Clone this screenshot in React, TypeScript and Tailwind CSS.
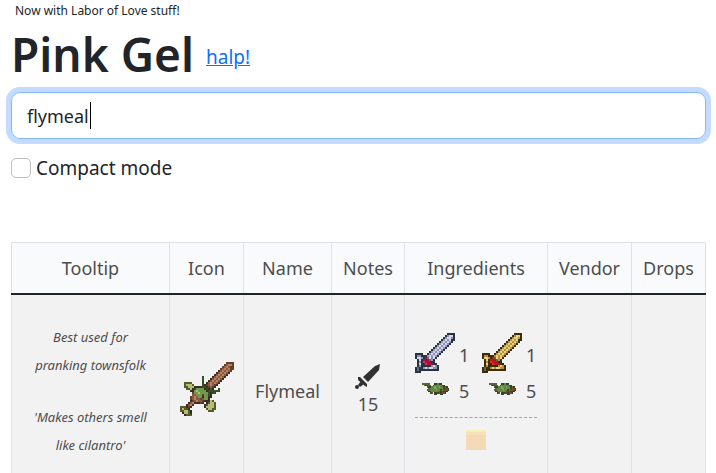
import { useState } from "react";

type Palette = Record<string, string>;

const FLYMEAL = [
  ".......................dddd",
  "......................dblld",
  ".....................dblbdd",
  "....................dblbldd",
  "...................kblblbd",
  "..................kblblbk",
  ".................kblblbk",
  "...........h....kblblbk",
  "...........h...kblblbk",
  "...........h..kblblbk",
  "..oooo.....h.kblblbk",
  "..oyyyo....hkdblbdk",
  "..ooyyykkkkhhkdbdk",
  "...ooykhggggkhkdk..h",
  ".....kkgyggggkhhhhhh",
  "......dggygggghkhh",
  "......bbgggdgghk",
  ".....dblbggkggkk",
  ".....dblbbdbggk",
  ".....kdblbbdkkkyo",
  "....kblkkkdk.koyyo",
  "...kblk.....koyyyo",
  "oookdk......kyyyyo",
  "oyook........oyyoo",
  "ooyyok........ooo",
  ".kyyok",
  "..kooo",
];
const FLYMEAL_COLORS: Palette = {
  k: "#3a2c22", d: "#63402c", b: "#8a5a3e", l: "#b58263",
  g: "#6f9a4c", h: "#33502b", y: "#b6bd76", o: "#565c2e",
};

const SWORD = [
  "................kkkk",
  "...............kswwk",
  "..............kswwsk",
  ".............kswswkk",
  "............kswswsk",
  "...........kswswsk",
  "..........kswswsk",
  ".........kswswsk",
  "........kswswsk",
  ".......kswswsk",
  "kkkk..kswswsk",
  "ksskkkswswsk",
  "kwwskrmwswk",
  ".kwkrrrmsk",
  ".kskprrrkk",
  ".kwkkprrrkk",
  ".kskkkkkswsk",
  "kmkkswswwssk",
  "kmkkkkkkkkkk",
  "kkk",
];
const SILVER: Palette = { k: "#27333f", s: "#8b92b4", w: "#d9d3ea", m: "#626a84", r: "#a80f38", p: "#e03058" };
const GOLD: Palette = { k: "#3b2a0c", s: "#b1913c", w: "#e8d27a", m: "#6c6250", r: "#b51a18", p: "#e83028" };

const BEETLE = [
  "ooooo...kkgkk.....",
  ".okkoo.kgggggkk...",
  "...okkggyggyggkok.",
  "....ogggyyggggkbbk",
  "...ooggggyggdgbbbk",
  "....kkgggggbdbdkk.",
  ".....kb.kkdbkbbk..",
  "........kk..kk....",
];
const BEETLE_COLORS: Palette = { k: "#36422c", g: "#5f8842", y: "#86a75a", o: "#59653a", b: "#704c2e", d: "#4a4429" };

function Sprite({ rows, colors, label, className }: { rows: string[]; colors: Palette; label: string; className: string }) {
  const width = Math.max(...rows.map((row) => row.length));
  return (
    <svg role="img" aria-label={label} viewBox={`0 0 ${width} ${rows.length}`} shapeRendering="crispEdges" className={className}>
      {rows.flatMap((row, y) =>
        [...row].map((cell, x) => (cell === "." ? null : <rect key={`${x}-${y}`} x={x} y={y} width="1" height="1" fill={colors[cell]} />)),
      )}
    </svg>
  );
}

function MeleeIcon() {
  return (
    <svg role="img" aria-label="Melee" viewBox="0 0 26 26" className="h-[26px] w-[26px] fill-[#2f3032]">
      <path d="M25 0 20 2 8 13 13 18 24 6Z" />
      <path d="M3 13 5 13 12 20 12 23 10 22 3 16Z" />
      <path d="M6 17 9 20 5 23 3 21Z" />
      <circle cx="2" cy="23" r="2" />
    </svg>
  );
}

function Ingredient({ children, count }: { children: React.ReactNode; count: number }) {
  return (
    <div className="flex items-center gap-1">
      <span className="flex w-10 justify-center">{children}</span>
      <span>{count}</span>
    </div>
  );
}

const columns = [
  { name: "Tooltip", width: "w-[158px]" },
  { name: "Icon", width: "w-[74px]" },
  { name: "Name", width: "w-[88px]" },
  { name: "Notes", width: "w-[73px]" },
  { name: "Ingredients", width: "w-[143px]" },
  { name: "Vendor", width: "w-[84px]" },
  { name: "Drops", width: "w-[74px]" },
];

export default function App() {
  const [query, setQuery] = useState("flymeal");
  const cell = "border-x border-[#dee2e6]";
  return (
    <main className="h-screen overflow-hidden bg-white pr-[10px] pl-[11px] font-['Noto_Sans',sans-serif] text-lg text-[#212529]">
      <p className="px-1 pt-0.5 text-xs leading-[18px]">Now with Labor of Love stuff!</p>
      <header className="flex items-center gap-3">
        <h1 className="text-[46px] leading-[68px] font-semibold">Pink Gel</h1>
        <a href="#help" className="mt-2 text-[19px] text-[#0d6efd] underline">halp!</a>
      </header>
      <div className="relative mt-1">
        <input
          type="text"
          aria-label="Search items"
          value={query}
          onChange={(e) => setQuery(e.target.value)}
          className="block h-[47px] w-full rounded-[9px] border border-[#86b7fe] px-[15px] ring-5 ring-[#c2dbfe] outline-none"
        />
        {query === "flymeal" && <span aria-hidden="true" className="absolute top-[10px] left-[79px] h-[27px] w-px bg-black" />}
      </div>
      <label className="mt-[14px] flex w-fit items-center gap-[5px] text-[19px] leading-[30px]">
        <input type="checkbox" className="h-5 w-5 appearance-none rounded-[5px] border border-[#bfbfbf] bg-white checked:bg-[#0d6efd]" />
        Compact mode
      </label>
      <table className="mt-[59px] w-full table-fixed border-collapse text-center text-[#4d4d4d]">
        <colgroup>
          {columns.map((c) => <col key={c.name} className={c.width} />)}
        </colgroup>
        <thead>
          <tr className="h-[51px] border-t border-b-2 border-t-[#dee2e6] border-b-[#212529] bg-[#f8fafc]">
            {columns.map((c) => <th key={c.name} scope="col" className={`${cell} p-0 pt-px font-normal`}>{c.name}</th>)}
          </tr>
        </thead>
        <tbody>
          <tr className="h-[194px] bg-[#f2f2f2]">
            <td className={`${cell} p-0 text-[13px] leading-7 italic`}>
              <p>Best used for<br />pranking townsfolk</p>
              <p className="mt-6">'Makes others smell<br />like cilantro'</p>
            </td>
            <td className={`${cell} p-0 pb-1`}><Sprite rows={FLYMEAL} colors={FLYMEAL_COLORS} label="Flymeal" className="mx-auto h-[54px] w-[54px]" /></td>
            <td className={`${cell} p-0`}>Flymeal</td>
            <td className={`${cell} p-0`}>
              <div className="flex flex-col items-center"><MeleeIcon /><span>15</span></div>
            </td>
            <td className={`${cell} px-[10px] py-0`}>
              <div className="grid grid-cols-2 gap-x-3">
                <Ingredient count={1}><Sprite rows={SWORD} colors={SILVER} label="Silver Broadsword" className="mb-1 h-10 w-10" /></Ingredient>
                <Ingredient count={1}><Sprite rows={SWORD} colors={GOLD} label="Gold Broadsword" className="mb-1 h-10 w-10" /></Ingredient>
                <Ingredient count={5}><Sprite rows={BEETLE} colors={BEETLE_COLORS} label="Stink bug" className="mb-1 h-3 w-[27px]" /></Ingredient>
                <Ingredient count={5}><Sprite rows={BEETLE} colors={BEETLE_COLORS} label="Stink bug" className="mb-1 h-3 w-[27px]" /></Ingredient>
              </div>
              <hr className="mt-3 border-dashed border-[#a4a4a4]" />
              <div role="img" aria-label="Crafting station" className="mx-auto mt-3 h-5 w-5 border-t-2 border-[#f5f0b8] bg-[#f4dab6]">
                <div className="h-[3px] bg-[#f5e2b8]" />
              </div>
            </td>
            <td className={cell} />
            <td className={cell} />
          </tr>
        </tbody>
      </table>
    </main>
  );
}
